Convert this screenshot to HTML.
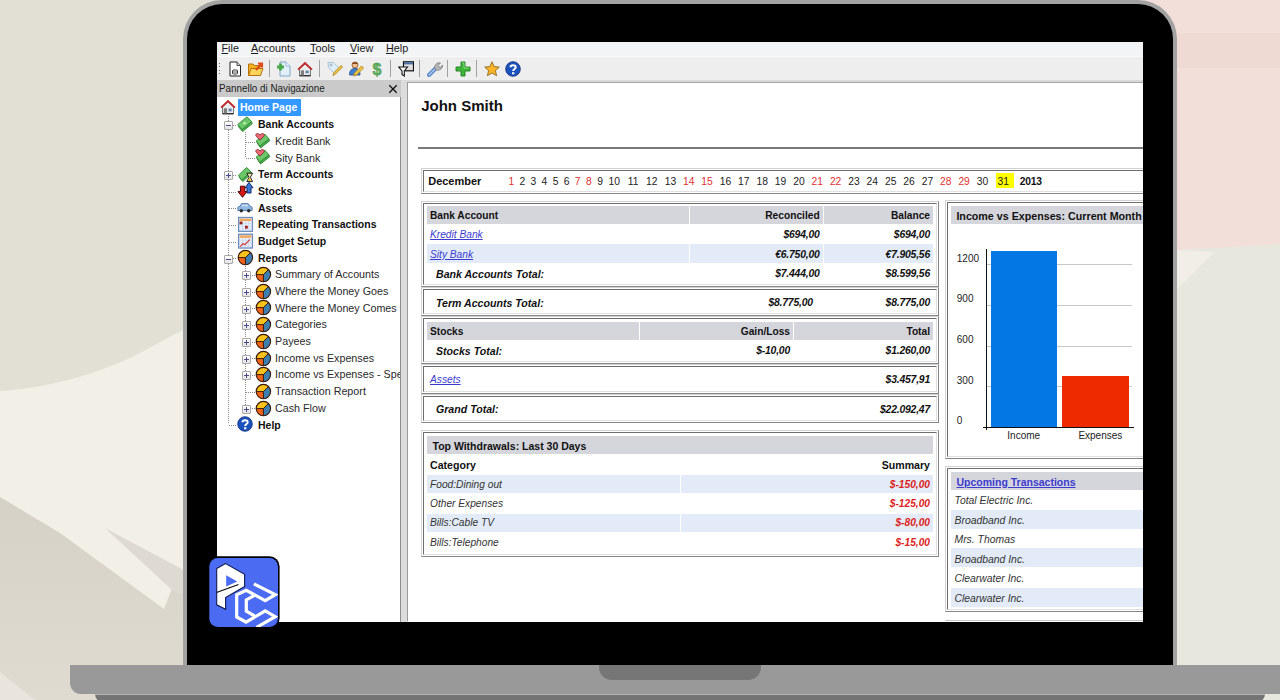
<!DOCTYPE html><html><head><meta charset="utf-8"><style>
*{margin:0;padding:0;box-sizing:border-box}
html,body{width:1280px;height:700px;overflow:hidden;background:#e6e4da;font-family:"Liberation Sans",sans-serif}
.a{position:absolute}
.t{white-space:nowrap;line-height:1}
#bg{position:absolute;left:0;top:0;width:1280px;height:700px}
#outline{position:absolute;left:183px;top:0px;width:994px;height:720px;background:#a2a2a2;border-radius:39px 39px 0 0}
#bezel{position:absolute;left:187px;top:3.6px;width:986px;height:700px;background:#000;border-radius:35px 35px 0 0}
#screen{position:absolute;left:217px;top:42px;width:926px;height:580px;background:#fff;overflow:hidden}
#inner{position:absolute;left:-217px;top:-42px;width:1280px;height:700px}
#base{position:absolute;left:70px;top:665px;width:1230px;height:29px;background:#999;border-radius:0 0 0 11px}
#basebot{position:absolute;left:95px;top:694px;width:1170px;height:8px;background:#747474;border-radius:0 0 8px 8px;border-top:1px solid #b4b4b4}
#notch{position:absolute;left:599px;top:665px;width:162px;height:15px;background:#767676;border-radius:0 0 13px 13px}
.box{position:absolute;border:1px solid;border-color:#d2d2d2 #868686 #868686 #d2d2d2;padding:1px}
.box>i{display:block;width:100%;height:100%;border:1px solid;border-color:#6e6e6e #e0e0e0 #e0e0e0 #6e6e6e}
.lk{color:#3b3bd0;text-decoration:underline}
</style></head><body>
<svg width="0" height="0" style="position:absolute"><defs>
<symbol id="house" viewBox="0 0 16 16" overflow="visible">
 <path d="M2.5 8 V15 H13.5 V8 L8 3 Z" fill="#ececec" stroke="#6a6a6a" stroke-width="0.9"/>
 <path d="M2.5 14.6 H13.5" stroke="#333" stroke-width="1.2"/>
 <path d="M1 8.6 L8 2 L15 8.6" fill="none" stroke="#c52a2e" stroke-width="1.8"/>
 <rect x="3.8" y="9.3" width="3.2" height="5.2" fill="#7d7d7d"/>
 <rect x="8.3" y="9.3" width="3.6" height="3.2" fill="#5a7fb3" stroke="#ddd" stroke-width="0.5"/>
</symbol>
<symbol id="money" viewBox="0 0 16 16" overflow="visible">
 <path d="M1.3 10.5 L11 2.3 L15.6 7.3 L5.6 15.6 Z" fill="#4caa4c" stroke="#2f8a34" stroke-width="0.9"/>
 <path d="M0.6 8.6 L10 0.8 L14.6 5.6 L5 13.5 Z" fill="#6cc66a" stroke="#2f8a34" stroke-width="0.9"/>
 <ellipse cx="7.6" cy="7.2" rx="1.6" ry="1.3" fill="#b6ecb0"/>
</symbol>
<symbol id="moneyheart" viewBox="0 0 16 16" overflow="visible">
 <path d="M2 9.8 L10.6 2.5 L15 7.5 L5.6 15 Z" fill="#4caa4c" stroke="#2f8a34" stroke-width="0.9"/>
 <path d="M1.2 8 L9.8 1.2 L14 5.8 L4.6 13.2 Z" fill="#6cc66a" stroke="#2f8a34" stroke-width="0.9"/>
 <path d="M5 7 L1.2 3.3 C-0.2 1.6 2.2 -0.6 3.8 1 L5 2.1 L6.2 1 C7.8 -0.6 10.2 1.6 8.8 3.3 Z" fill="#ec6a74" stroke="#7a1820" stroke-width="0.8"/>
</symbol>
<symbol id="term" viewBox="0 0 16 16" overflow="visible">
 <path d="M2 11 L10.7 2.6 L14.9 7 L5.8 15.6 Z" fill="#4caa4c" stroke="#2f8a34" stroke-width="0.9"/>
 <path d="M1.3 9.4 L9.7 1.4 L13.9 5.8 L4.6 14 Z" fill="#6cc66a" stroke="#2f8a34" stroke-width="0.9"/>
 <path d="M9.8 7.2 H15.6 L13.4 11.2 L15.6 15.6 H9.8 L12 11.2 Z" fill="#f3e7b0" stroke="#222" stroke-width="1"/>
 <path d="M10.8 15 H14.6 L12.7 12.2 Z" fill="#e8c020"/>
</symbol>
<symbol id="stocks" viewBox="0 0 16 16" overflow="visible">
 <path d="M8.2 4.8 L12 -0.6 L16 4.8 H14 V10 H10 V4.8 Z" fill="#3a78d8" stroke="#0b2a6a" stroke-width="1"/>
 <path d="M3.4 3.2 H7.8 V8.6 H9.9 L5.5 14.3 L1 8.6 H3.4 Z" fill="#d81818" stroke="#4a0505" stroke-width="1"/>
</symbol>
<symbol id="car" viewBox="0 0 16 16" overflow="visible">
 <path d="M0.9 11.6 V8.6 C0.9 7.8 1.6 7.6 2.8 7.4 L4.6 4.6 H11.2 L13.2 7.4 C14.6 7.6 15.1 7.9 15.1 8.6 V11.6 Z" fill="#90b6e2" stroke="#4a6f9e" stroke-width="0.9"/>
 <rect x="5.3" y="5.6" width="2.3" height="1.8" fill="#d9e7f7"/><rect x="8.3" y="5.6" width="2.3" height="1.8" fill="#d9e7f7"/>
 <circle cx="4.3" cy="11.8" r="1.7" fill="#2a2a2a"/><circle cx="11.7" cy="11.8" r="1.7" fill="#2a2a2a"/>
</symbol>
<symbol id="cal1" viewBox="0 0 16 16" overflow="visible">
 <rect x="1.6" y="1.5" width="13.8" height="13.8" fill="#eef3fb" stroke="#6a8cbf" stroke-width="1.3"/>
 <rect x="2.6" y="2.6" width="11.8" height="2.6" fill="#f3a860"/>
 <path d="M2.5 7.6 H14.5 M2.5 10.3 H14.5 M2.5 13 H14.5 M5.6 5.2 V14.5 M8.6 5.2 V14.5 M11.6 5.2 V14.5" stroke="#c4d3ea" stroke-width="0.7"/>
 <rect x="2.6" y="5.6" width="2.8" height="2.8" fill="#8e1a1a"/><rect x="8" y="9.8" width="2.8" height="2.8" fill="#a51c1c"/>
</symbol>
<symbol id="cal2" viewBox="0 0 16 16" overflow="visible">
 <rect x="1.6" y="1.2" width="13.8" height="13.8" fill="#eef3fb" stroke="#6a8cbf" stroke-width="1.3"/>
 <rect x="2.6" y="2.3" width="11.8" height="2.6" fill="#f3a860"/>
 <path d="M2.5 7.3 H14.5 M2.5 10 H14.5 M2.5 12.7 H14.5 M5.6 4.9 V14.2 M8.6 4.9 V14.2 M11.6 4.9 V14.2" stroke="#c4d3ea" stroke-width="0.7"/>
 <path d="M3.2 13.6 L6 10.8 L8 11.6 L12.8 6.6" fill="none" stroke="#d03a3a" stroke-width="1.2"/>
</symbol>
<symbol id="pie" viewBox="0 0 16 16" overflow="visible">
 <circle cx="8.4" cy="8.6" r="7.2" fill="#f2641a"/>
 <path d="M8.4 8.6 L1.2 8.6 A7.2 7.2 0 0 1 13.5 3.5 Z" fill="#f7c21c"/>
 <path d="M8.4 8.6 L13.5 3.5 A7.2 7.2 0 0 1 8.4 15.8 Z" fill="#3c7fb0"/>
 <path d="M1.2 8.6 H8.4 L13.5 3.5 M8.4 8.6 V15.8" stroke="#3a1a08" stroke-width="1" fill="none"/>
 <circle cx="8.4" cy="8.6" r="7.2" fill="none" stroke="#3a1a08" stroke-width="1.1"/>
</symbol>
<symbol id="help" viewBox="0 0 16 16" overflow="visible">
 <circle cx="8" cy="8" r="7.3" fill="#1c52bd" stroke="#0a2a78" stroke-width="0.8"/>
 <path d="M5.5 6.3 C5.5 3.5 10.7 3.5 10.7 6.2 C10.7 8.1 8.2 8 8.2 10.1" fill="none" stroke="#fff" stroke-width="2"/>
 <rect x="7.1" y="11.2" width="2.2" height="2.1" fill="#fff"/>
</symbol>
<symbol id="doc" viewBox="0 0 16 16">
 <path d="M3 1 H10 L13.5 4.5 V15 H3 Z" fill="#fff" stroke="#222" stroke-width="1"/>
 <path d="M10 1 V4.5 H13.5" fill="#ddd" stroke="#222" stroke-width="0.8"/>
 <rect x="5.5" y="9" width="5" height="4" rx="1" fill="none" stroke="#333" stroke-width="1"/>
 <path d="M5.5 11 H10.5" stroke="#333" stroke-width="0.8"/>
</symbol>
<symbol id="folder" viewBox="0 0 16 16">
 <path d="M0.5 3 H5 L6.5 4.5 H12 V14.5 H0.5 Z" fill="#f3b31f" stroke="#b7700c" stroke-width="1"/>
 <path d="M0.5 14.5 L3 7.5 H15 L12.5 14.5 Z" fill="#fbd25a" stroke="#b7700c" stroke-width="1"/>
 <path d="M8 9 L13 3.5 M10 2.5 H14 V6.5" fill="none" stroke="#e24a16" stroke-width="2.2"/>
</symbol>
<symbol id="adddoc" viewBox="0 0 16 16">
 <path d="M4 1 H10 L14 5 V15 H4 Z" fill="#e3f0fa" stroke="#7ea6c8" stroke-width="1"/>
 <path d="M10 1 V5 H14" fill="#fff" stroke="#7ea6c8" stroke-width="0.8"/>
 <path d="M4.5 2.5 V9.5 M1 6 H8" stroke="#48a84a" stroke-width="2.8"/>
</symbol>
<symbol id="tag" viewBox="0 0 16 16">
 <path d="M1 1.5 H6.5 L12 7 L7 12 L1.5 6.5 Z" fill="#dfeefa" stroke="#a9c3d8" stroke-width="1"/>
 <circle cx="4" cy="4" r="1" fill="#fff" stroke="#9ab"/>
 <path d="M6 14.5 L7 11.5 L14 4.5 L15.5 6 L8.5 13 Z" fill="#f3c94a" stroke="#b28516" stroke-width="0.9"/>
</symbol>
<symbol id="person" viewBox="0 0 16 16">
 <circle cx="7" cy="4" r="3" fill="#f0c090" stroke="#8a4a20" stroke-width="0.8"/>
 <path d="M4 3 C4 0.5 10 0.5 10 3" fill="#8a4a1a"/>
 <path d="M1.5 14 C1.5 9 4 7.5 7 7.5 C10 7.5 12 9 12 14 Z" fill="#3f7fd0" stroke="#1e4e90" stroke-width="0.8"/>
 <path d="M5.5 15 L6.5 12 L13.5 5 L15.5 7 L8.5 14 Z" fill="#f3c94a" stroke="#b28516" stroke-width="0.9"/>
</symbol>
<symbol id="dollar" viewBox="0 0 16 16">
 <text x="8" y="14" text-anchor="middle" font-family="Liberation Sans" font-weight="bold" font-size="16" fill="#5bb55a" stroke="#3a8a3a" stroke-width="0.4">$</text>
</symbol>
<symbol id="filter" viewBox="0 0 16 16">
 <rect x="5.5" y="0.8" width="10" height="9" fill="#e0e0e0" stroke="#111" stroke-width="1.2"/>
 <rect x="6" y="1.4" width="9" height="2" fill="#4a6fa8"/>
 <path d="M0.8 6 H9.5 L6.3 10 V15 L4 13.5 V10 Z" fill="#fff" stroke="#111" stroke-width="1.1"/>
</symbol>
<symbol id="wrench" viewBox="0 0 16 16">
 <path d="M2 14 L9 7" stroke="#5a87c8" stroke-width="4" stroke-linecap="round"/>
 <path d="M2 14 L9 7" stroke="#a8c8ee" stroke-width="1.5" stroke-linecap="round"/>
 <path d="M8 8 C7 4 10 1 13.5 2 L11 4.5 L12 6 L13.5 6.5 L15.5 4 C16 7.5 12.5 10 9.5 9 Z" fill="#b8b8b8" stroke="#777" stroke-width="0.8"/>
</symbol>
<symbol id="plus" viewBox="0 0 16 16">
 <path d="M6 1 H10 V6 H15 V10 H10 V15 H6 V10 H1 V6 H6 Z" fill="#3fb53a" stroke="#1d7d1d" stroke-width="0.9"/>
 <path d="M7 2 H9 V7 H14" fill="none" stroke="#9be28f" stroke-width="0.8"/>
</symbol>
<symbol id="star" viewBox="0 0 16 16">
 <path d="M8 0.8 L10.2 5.6 L15.3 6.1 L11.4 9.5 L12.6 14.7 L8 12 L3.4 14.7 L4.6 9.5 L0.7 6.1 L5.8 5.6 Z" fill="#f9b42a" stroke="#8f6a1e" stroke-width="0.9"/>
</symbol>
</defs></svg>
<svg id="bg" width="1280" height="700" viewBox="0 0 1280 700">
  <rect x="0" y="0" width="1280" height="700" fill="#e8e7dd"/>
  <path d="M0 0 H640 V700 H0 Z" fill="#e2e0d4"/>
  <path d="M0 391 C50 388 110 372 160 342 L240 300 V700 H0 Z" fill="#f2efe6"/>
  <defs><linearGradient id="dk" x1="0" y1="0" x2="0" y2="1"><stop offset="0" stop-color="#d6d1c7"/><stop offset="1" stop-color="#dfdbd1"/></linearGradient></defs><path d="M0 497 L60 533 L164 609 L172 588 L240 620 V700 H0 Z" fill="url(#dk)"/>
  <path d="M105 528 L240 600 V625 L172 590 Z" fill="#dedad1"/>
  <path d="M0 672 L35 700 H0 Z" fill="#e9e5dc"/>
  <path d="M900 0 H1280 V244 L1176 250 L900 300 Z" fill="#f2dfd9"/>
  <path d="M900 33 H1280 V68 H900 Z" fill="#eed9d3"/><path d="M1176 250 L1215 252 L1176 290 Z" fill="#f0eee6"/>
</svg>
<div id="outline"></div><div id="bezel"></div>
<div id="screen"><div id="inner">
<div class="a" style="left:217px;top:42px;width:926px;height:14px;background:#f3f4f5"></div>
<div class="a t" style="left:221.50px;top:42.53px;font-size:10.8px;font-weight:normal;font-style:normal;color:#1a1a1a;"><u>F</u>ile</div>
<div class="a t" style="left:251.00px;top:42.53px;font-size:10.8px;font-weight:normal;font-style:normal;color:#1a1a1a;"><u>A</u>ccounts</div>
<div class="a t" style="left:310.00px;top:42.53px;font-size:10.8px;font-weight:normal;font-style:normal;color:#1a1a1a;"><u>T</u>ools</div>
<div class="a t" style="left:350.00px;top:42.53px;font-size:10.8px;font-weight:normal;font-style:normal;color:#1a1a1a;"><u>V</u>iew</div>
<div class="a t" style="left:386.00px;top:42.53px;font-size:10.8px;font-weight:normal;font-style:normal;color:#1a1a1a;"><u>H</u>elp</div>
<div class="a" style="left:217px;top:57px;width:926px;height:23px;background:#eeeeee"></div>
<div class="a" style="left:217px;top:56px;width:926px;height:1px;background:#f9f9f9"></div>
<div class="a" style="left:219px;top:63px;width:1px;height:1px;background:#666"></div>
<div class="a" style="left:219px;top:66px;width:1px;height:1px;background:#666"></div>
<div class="a" style="left:219px;top:70px;width:1px;height:1px;background:#666"></div>
<div class="a" style="left:219px;top:73px;width:1px;height:1px;background:#666"></div>
<svg class="a" style="left:226.5px;top:60.5px;overflow:visible" width="16" height="16" viewBox="0 0 16 16"><use href="#doc"/></svg>
<svg class="a" style="left:247.5px;top:60.5px;overflow:visible" width="16" height="16" viewBox="0 0 16 16"><use href="#folder"/></svg>
<svg class="a" style="left:276px;top:60.5px;overflow:visible" width="16" height="16" viewBox="0 0 16 16"><use href="#adddoc"/></svg>
<svg class="a" style="left:297px;top:60.5px;overflow:visible" width="16" height="16" viewBox="0 0 16 16"><use href="#house"/></svg>
<svg class="a" style="left:326.5px;top:60.5px;overflow:visible" width="16" height="16" viewBox="0 0 16 16"><use href="#tag"/></svg>
<svg class="a" style="left:347.5px;top:60.5px;overflow:visible" width="16" height="16" viewBox="0 0 16 16"><use href="#person"/></svg>
<svg class="a" style="left:369px;top:60.5px;overflow:visible" width="16" height="16" viewBox="0 0 16 16"><use href="#dollar"/></svg>
<svg class="a" style="left:398px;top:60.5px;overflow:visible" width="16" height="16" viewBox="0 0 16 16"><use href="#filter"/></svg>
<svg class="a" style="left:426.5px;top:60.5px;overflow:visible" width="16" height="16" viewBox="0 0 16 16"><use href="#wrench"/></svg>
<svg class="a" style="left:455px;top:60.5px;overflow:visible" width="16" height="16" viewBox="0 0 16 16"><use href="#plus"/></svg>
<svg class="a" style="left:483.5px;top:60.5px;overflow:visible" width="16" height="16" viewBox="0 0 16 16"><use href="#star"/></svg>
<svg class="a" style="left:504.5px;top:60.5px;overflow:visible" width="16" height="16" viewBox="0 0 16 16"><use href="#help"/></svg>
<div class="a" style="left:269px;top:60px;width:1px;height:17px;background:#a0a0a0"></div>
<div class="a" style="left:319px;top:60px;width:1px;height:17px;background:#a0a0a0"></div>
<div class="a" style="left:390px;top:60px;width:1px;height:17px;background:#a0a0a0"></div>
<div class="a" style="left:419px;top:60px;width:1px;height:17px;background:#a0a0a0"></div>
<div class="a" style="left:447px;top:60px;width:1px;height:17px;background:#a0a0a0"></div>
<div class="a" style="left:476px;top:60px;width:1px;height:17px;background:#a0a0a0"></div>
<div class="a" style="left:217px;top:80px;width:184px;height:17px;background:#cacaca"></div>
<div class="a t" style="left:219.30px;top:83.03px;font-size:11px;font-weight:normal;font-style:normal;color:#1a1a1a;transform:scaleX(0.895);transform-origin:0 0">Pannello di Navigazione</div>
<svg class="a" style="left:388px;top:84px" width="10" height="10" viewBox="0 0 10 10"><path d="M1.3 1.3 L8.7 8.7 M8.7 1.3 L1.3 8.7" stroke="#111" stroke-width="1.3"/></svg>
<div class="a" style="left:217px;top:97px;width:183px;height:524px;background:#fff"></div>
<div class="a" style="left:400px;top:97px;width:1.5px;height:525px;background:#8e8e8e"></div>
<div class="a" style="left:401px;top:80px;width:7px;height:542px;background:#dcdcdc"></div>
<div class="a" style="left:407px;top:82px;width:1px;height:539px;background:#9a9a9a"></div>
<div class="a" style="left:408px;top:80px;width:735px;height:2px;background:#d8d8d8"></div>
<div class="a" style="left:408px;top:82px;width:735px;height:539px;background:#fff;border-top:1px solid #a8a8a8"></div>
<div class="a" style="left:217px;top:97px;width:183px;height:524px;overflow:hidden"><div class="a" style="left:-217px;top:-97px;width:1280px;height:700px">
<div class="a" style="left:228px;top:116px;width:1px;height:308px;background:repeating-linear-gradient(180deg,#8a8a8a 0 1px,transparent 1px 2px)"></div>
<div class="a" style="left:245px;top:132px;width:1px;height:25px;background:repeating-linear-gradient(180deg,#8a8a8a 0 1px,transparent 1px 2px)"></div>
<div class="a" style="left:245px;top:266px;width:1px;height:141px;background:repeating-linear-gradient(180deg,#8a8a8a 0 1px,transparent 1px 2px)"></div>
<svg class="a" style="left:220px;top:99px;overflow:visible" width="16" height="16" viewBox="0 0 16 16"><use href="#house"/></svg>
<div class="a" style="left:238px;top:99px;width:63px;height:17px;background:#3399ff"></div>
<div class="a t" style="left:240.30px;top:101.79px;font-size:11.3px;font-weight:bold;font-style:normal;color:#fff;transform:scaleX(0.93);transform-origin:0 0">Home Page</div>
<div class="a" style="left:229px;top:125px;width:8px;height:1px;background:repeating-linear-gradient(90deg,#8a8a8a 0 1px,transparent 1px 2px)"></div>
<svg class="a" style="left:237px;top:116px;overflow:visible" width="16" height="16" viewBox="0 0 16 16"><use href="#money"/></svg>
<div class="a" style="left:224px;top:121.1px;width:9px;height:9px;border:1px solid #a8a8a8;background:linear-gradient(#fff,#e4e4e4);border-radius:1px"></div>
<div class="a" style="left:226px;top:125.1px;width:5px;height:1px;background:#4a4a8a"></div>
<div class="a t" style="left:258.00px;top:119.27px;font-size:11.3px;font-weight:bold;font-style:normal;color:#111;transform:scaleX(0.93);transform-origin:0 0">Bank Accounts</div>
<div class="a" style="left:246px;top:142px;width:9px;height:1px;background:repeating-linear-gradient(90deg,#8a8a8a 0 1px,transparent 1px 2px)"></div>
<svg class="a" style="left:255px;top:133px;overflow:visible" width="16" height="16" viewBox="0 0 16 16"><use href="#moneyheart"/></svg>
<div class="a t" style="left:275.00px;top:135.95px;font-size:11.3px;font-weight:normal;font-style:normal;color:#2a2a2a;transform:scaleX(0.95);transform-origin:0 0">Kredit Bank</div>
<div class="a" style="left:246px;top:158px;width:9px;height:1px;background:repeating-linear-gradient(90deg,#8a8a8a 0 1px,transparent 1px 2px)"></div>
<svg class="a" style="left:255px;top:149px;overflow:visible" width="16" height="16" viewBox="0 0 16 16"><use href="#moneyheart"/></svg>
<div class="a t" style="left:275.00px;top:152.63px;font-size:11.3px;font-weight:normal;font-style:normal;color:#2a2a2a;transform:scaleX(0.95);transform-origin:0 0">Sity Bank</div>
<div class="a" style="left:229px;top:175px;width:8px;height:1px;background:repeating-linear-gradient(90deg,#8a8a8a 0 1px,transparent 1px 2px)"></div>
<svg class="a" style="left:237px;top:166px;overflow:visible" width="16" height="16" viewBox="0 0 16 16"><use href="#term"/></svg>
<div class="a" style="left:224px;top:171.1px;width:9px;height:9px;border:1px solid #a8a8a8;background:linear-gradient(#fff,#e4e4e4);border-radius:1px"></div>
<div class="a" style="left:226px;top:175.1px;width:5px;height:1px;background:#4a4a8a"></div>
<div class="a" style="left:228px;top:173.1px;width:1px;height:5px;background:#4a4a8a"></div>
<div class="a t" style="left:258.00px;top:169.31px;font-size:11.3px;font-weight:bold;font-style:normal;color:#111;transform:scaleX(0.93);transform-origin:0 0">Term Accounts</div>
<div class="a" style="left:229px;top:192px;width:8px;height:1px;background:repeating-linear-gradient(90deg,#8a8a8a 0 1px,transparent 1px 2px)"></div>
<svg class="a" style="left:237px;top:183px;overflow:visible" width="16" height="16" viewBox="0 0 16 16"><use href="#stocks"/></svg>
<div class="a t" style="left:258.00px;top:185.99px;font-size:11.3px;font-weight:bold;font-style:normal;color:#111;transform:scaleX(0.93);transform-origin:0 0">Stocks</div>
<div class="a" style="left:229px;top:208px;width:8px;height:1px;background:repeating-linear-gradient(90deg,#8a8a8a 0 1px,transparent 1px 2px)"></div>
<svg class="a" style="left:237px;top:199px;overflow:visible" width="16" height="16" viewBox="0 0 16 16"><use href="#car"/></svg>
<div class="a t" style="left:258.00px;top:202.67px;font-size:11.3px;font-weight:bold;font-style:normal;color:#111;transform:scaleX(0.93);transform-origin:0 0">Assets</div>
<div class="a" style="left:229px;top:225px;width:8px;height:1px;background:repeating-linear-gradient(90deg,#8a8a8a 0 1px,transparent 1px 2px)"></div>
<svg class="a" style="left:237px;top:216px;overflow:visible" width="16" height="16" viewBox="0 0 16 16"><use href="#cal1"/></svg>
<div class="a t" style="left:258.00px;top:219.35px;font-size:11.3px;font-weight:bold;font-style:normal;color:#111;transform:scaleX(0.93);transform-origin:0 0">Repeating Transactions</div>
<div class="a" style="left:229px;top:242px;width:8px;height:1px;background:repeating-linear-gradient(90deg,#8a8a8a 0 1px,transparent 1px 2px)"></div>
<svg class="a" style="left:237px;top:233px;overflow:visible" width="16" height="16" viewBox="0 0 16 16"><use href="#cal2"/></svg>
<div class="a t" style="left:258.00px;top:236.03px;font-size:11.3px;font-weight:bold;font-style:normal;color:#111;transform:scaleX(0.93);transform-origin:0 0">Budget Setup</div>
<div class="a" style="left:229px;top:258px;width:8px;height:1px;background:repeating-linear-gradient(90deg,#8a8a8a 0 1px,transparent 1px 2px)"></div>
<svg class="a" style="left:237px;top:249px;overflow:visible" width="16" height="16" viewBox="0 0 16 16"><use href="#pie"/></svg>
<div class="a" style="left:224px;top:254.5px;width:9px;height:9px;border:1px solid #a8a8a8;background:linear-gradient(#fff,#e4e4e4);border-radius:1px"></div>
<div class="a" style="left:226px;top:258.5px;width:5px;height:1px;background:#4a4a8a"></div>
<div class="a t" style="left:258.00px;top:252.71px;font-size:11.3px;font-weight:bold;font-style:normal;color:#111;transform:scaleX(0.93);transform-origin:0 0">Reports</div>
<div class="a" style="left:246px;top:275px;width:9px;height:1px;background:repeating-linear-gradient(90deg,#8a8a8a 0 1px,transparent 1px 2px)"></div>
<svg class="a" style="left:255px;top:266px;overflow:visible" width="16" height="16" viewBox="0 0 16 16"><use href="#pie"/></svg>
<div class="a" style="left:241.5px;top:271.2px;width:9px;height:9px;border:1px solid #a8a8a8;background:linear-gradient(#fff,#e4e4e4);border-radius:1px"></div>
<div class="a" style="left:243.5px;top:275.2px;width:5px;height:1px;background:#4a4a8a"></div>
<div class="a" style="left:245.5px;top:273.2px;width:1px;height:5px;background:#4a4a8a"></div>
<div class="a t" style="left:275.00px;top:269.39px;font-size:11.3px;font-weight:normal;font-style:normal;color:#2a2a2a;transform:scaleX(0.95);transform-origin:0 0">Summary of Accounts</div>
<div class="a" style="left:246px;top:292px;width:9px;height:1px;background:repeating-linear-gradient(90deg,#8a8a8a 0 1px,transparent 1px 2px)"></div>
<svg class="a" style="left:255px;top:283px;overflow:visible" width="16" height="16" viewBox="0 0 16 16"><use href="#pie"/></svg>
<div class="a" style="left:241.5px;top:287.9px;width:9px;height:9px;border:1px solid #a8a8a8;background:linear-gradient(#fff,#e4e4e4);border-radius:1px"></div>
<div class="a" style="left:243.5px;top:291.9px;width:5px;height:1px;background:#4a4a8a"></div>
<div class="a" style="left:245.5px;top:289.9px;width:1px;height:5px;background:#4a4a8a"></div>
<div class="a t" style="left:275.00px;top:286.07px;font-size:11.3px;font-weight:normal;font-style:normal;color:#2a2a2a;transform:scaleX(0.95);transform-origin:0 0">Where the Money Goes</div>
<div class="a" style="left:246px;top:308px;width:9px;height:1px;background:repeating-linear-gradient(90deg,#8a8a8a 0 1px,transparent 1px 2px)"></div>
<svg class="a" style="left:255px;top:299px;overflow:visible" width="16" height="16" viewBox="0 0 16 16"><use href="#pie"/></svg>
<div class="a" style="left:241.5px;top:304.6px;width:9px;height:9px;border:1px solid #a8a8a8;background:linear-gradient(#fff,#e4e4e4);border-radius:1px"></div>
<div class="a" style="left:243.5px;top:308.6px;width:5px;height:1px;background:#4a4a8a"></div>
<div class="a" style="left:245.5px;top:306.6px;width:1px;height:5px;background:#4a4a8a"></div>
<div class="a t" style="left:275.00px;top:302.75px;font-size:11.3px;font-weight:normal;font-style:normal;color:#2a2a2a;transform:scaleX(0.95);transform-origin:0 0">Where the Money Comes</div>
<div class="a" style="left:246px;top:325px;width:9px;height:1px;background:repeating-linear-gradient(90deg,#8a8a8a 0 1px,transparent 1px 2px)"></div>
<svg class="a" style="left:255px;top:316px;overflow:visible" width="16" height="16" viewBox="0 0 16 16"><use href="#pie"/></svg>
<div class="a" style="left:241.5px;top:321.2px;width:9px;height:9px;border:1px solid #a8a8a8;background:linear-gradient(#fff,#e4e4e4);border-radius:1px"></div>
<div class="a" style="left:243.5px;top:325.2px;width:5px;height:1px;background:#4a4a8a"></div>
<div class="a" style="left:245.5px;top:323.2px;width:1px;height:5px;background:#4a4a8a"></div>
<div class="a t" style="left:275.00px;top:319.43px;font-size:11.3px;font-weight:normal;font-style:normal;color:#2a2a2a;transform:scaleX(0.95);transform-origin:0 0">Categories</div>
<div class="a" style="left:246px;top:342px;width:9px;height:1px;background:repeating-linear-gradient(90deg,#8a8a8a 0 1px,transparent 1px 2px)"></div>
<svg class="a" style="left:255px;top:333px;overflow:visible" width="16" height="16" viewBox="0 0 16 16"><use href="#pie"/></svg>
<div class="a" style="left:241.5px;top:337.9px;width:9px;height:9px;border:1px solid #a8a8a8;background:linear-gradient(#fff,#e4e4e4);border-radius:1px"></div>
<div class="a" style="left:243.5px;top:341.9px;width:5px;height:1px;background:#4a4a8a"></div>
<div class="a" style="left:245.5px;top:339.9px;width:1px;height:5px;background:#4a4a8a"></div>
<div class="a t" style="left:275.00px;top:336.11px;font-size:11.3px;font-weight:normal;font-style:normal;color:#2a2a2a;transform:scaleX(0.95);transform-origin:0 0">Payees</div>
<div class="a" style="left:246px;top:358px;width:9px;height:1px;background:repeating-linear-gradient(90deg,#8a8a8a 0 1px,transparent 1px 2px)"></div>
<svg class="a" style="left:255px;top:350px;overflow:visible" width="16" height="16" viewBox="0 0 16 16"><use href="#pie"/></svg>
<div class="a" style="left:241.5px;top:354.6px;width:9px;height:9px;border:1px solid #a8a8a8;background:linear-gradient(#fff,#e4e4e4);border-radius:1px"></div>
<div class="a" style="left:243.5px;top:358.6px;width:5px;height:1px;background:#4a4a8a"></div>
<div class="a" style="left:245.5px;top:356.6px;width:1px;height:5px;background:#4a4a8a"></div>
<div class="a t" style="left:275.00px;top:352.79px;font-size:11.3px;font-weight:normal;font-style:normal;color:#2a2a2a;transform:scaleX(0.95);transform-origin:0 0">Income vs Expenses</div>
<div class="a" style="left:246px;top:375px;width:9px;height:1px;background:repeating-linear-gradient(90deg,#8a8a8a 0 1px,transparent 1px 2px)"></div>
<svg class="a" style="left:255px;top:366px;overflow:visible" width="16" height="16" viewBox="0 0 16 16"><use href="#pie"/></svg>
<div class="a" style="left:241.5px;top:371.3px;width:9px;height:9px;border:1px solid #a8a8a8;background:linear-gradient(#fff,#e4e4e4);border-radius:1px"></div>
<div class="a" style="left:243.5px;top:375.3px;width:5px;height:1px;background:#4a4a8a"></div>
<div class="a" style="left:245.5px;top:373.3px;width:1px;height:5px;background:#4a4a8a"></div>
<div class="a t" style="left:275.00px;top:369.47px;font-size:11.3px;font-weight:normal;font-style:normal;color:#2a2a2a;transform:scaleX(0.95);transform-origin:0 0">Income vs Expenses - Spe</div>
<div class="a" style="left:246px;top:392px;width:9px;height:1px;background:repeating-linear-gradient(90deg,#8a8a8a 0 1px,transparent 1px 2px)"></div>
<svg class="a" style="left:255px;top:383px;overflow:visible" width="16" height="16" viewBox="0 0 16 16"><use href="#pie"/></svg>
<div class="a t" style="left:275.00px;top:386.15px;font-size:11.3px;font-weight:normal;font-style:normal;color:#2a2a2a;transform:scaleX(0.95);transform-origin:0 0">Transaction Report</div>
<div class="a" style="left:246px;top:408px;width:9px;height:1px;background:repeating-linear-gradient(90deg,#8a8a8a 0 1px,transparent 1px 2px)"></div>
<svg class="a" style="left:255px;top:400px;overflow:visible" width="16" height="16" viewBox="0 0 16 16"><use href="#pie"/></svg>
<div class="a" style="left:241.5px;top:404.6px;width:9px;height:9px;border:1px solid #a8a8a8;background:linear-gradient(#fff,#e4e4e4);border-radius:1px"></div>
<div class="a" style="left:243.5px;top:408.6px;width:5px;height:1px;background:#4a4a8a"></div>
<div class="a" style="left:245.5px;top:406.6px;width:1px;height:5px;background:#4a4a8a"></div>
<div class="a t" style="left:275.00px;top:402.83px;font-size:11.3px;font-weight:normal;font-style:normal;color:#2a2a2a;transform:scaleX(0.95);transform-origin:0 0">Cash Flow</div>
<div class="a" style="left:229px;top:425px;width:8px;height:1px;background:repeating-linear-gradient(90deg,#8a8a8a 0 1px,transparent 1px 2px)"></div>
<svg class="a" style="left:237px;top:416px;overflow:visible" width="16" height="16" viewBox="0 0 16 16"><use href="#help"/></svg>
<div class="a t" style="left:258.00px;top:419.51px;font-size:11.3px;font-weight:bold;font-style:normal;color:#111;transform:scaleX(0.93);transform-origin:0 0">Help</div>
</div></div>
<div class="a t" style="left:421.20px;top:97.68px;font-size:15px;font-weight:bold;font-style:normal;color:#111;">John Smith</div>
<div class="a" style="left:418px;top:147px;width:725px;height:2px;background:#7a7a7a"></div>
<div class="box" style="left:421px;top:168px;width:760px;height:26px"><i></i></div>
<div class="a t" style="left:428.20px;top:176.43px;font-size:11px;font-weight:bold;font-style:normal;color:#111;">December</div>
<div class="a t" style="left:508.60px;top:176.77px;font-size:10.3px;font-weight:normal;font-style:normal;color:#e03030;">1</div>
<div class="a t" style="left:519.50px;top:176.77px;font-size:10.3px;font-weight:normal;font-style:normal;color:#222;">2</div>
<div class="a t" style="left:530.50px;top:176.77px;font-size:10.3px;font-weight:normal;font-style:normal;color:#222;">3</div>
<div class="a t" style="left:541.40px;top:176.77px;font-size:10.3px;font-weight:normal;font-style:normal;color:#222;">4</div>
<div class="a t" style="left:552.80px;top:176.77px;font-size:10.3px;font-weight:normal;font-style:normal;color:#222;">5</div>
<div class="a t" style="left:563.75px;top:176.77px;font-size:10.3px;font-weight:normal;font-style:normal;color:#222;">6</div>
<div class="a t" style="left:574.70px;top:176.77px;font-size:10.3px;font-weight:normal;font-style:normal;color:#e03030;">7</div>
<div class="a t" style="left:586.00px;top:176.77px;font-size:10.3px;font-weight:normal;font-style:normal;color:#e03030;">8</div>
<div class="a t" style="left:597.20px;top:176.77px;font-size:10.3px;font-weight:normal;font-style:normal;color:#222;">9</div>
<div class="a t" style="left:608.60px;top:176.77px;font-size:10.3px;font-weight:normal;font-style:normal;color:#222;">10</div>
<div class="a t" style="left:627.80px;top:176.77px;font-size:10.3px;font-weight:normal;font-style:normal;color:#222;">11</div>
<div class="a t" style="left:646.00px;top:176.77px;font-size:10.3px;font-weight:normal;font-style:normal;color:#222;">12</div>
<div class="a t" style="left:664.80px;top:176.77px;font-size:10.3px;font-weight:normal;font-style:normal;color:#222;">13</div>
<div class="a t" style="left:683.00px;top:176.77px;font-size:10.3px;font-weight:normal;font-style:normal;color:#e03030;">14</div>
<div class="a t" style="left:701.36px;top:176.77px;font-size:10.3px;font-weight:normal;font-style:normal;color:#e03030;">15</div>
<div class="a t" style="left:719.72px;top:176.77px;font-size:10.3px;font-weight:normal;font-style:normal;color:#222;">16</div>
<div class="a t" style="left:738.08px;top:176.77px;font-size:10.3px;font-weight:normal;font-style:normal;color:#222;">17</div>
<div class="a t" style="left:756.44px;top:176.77px;font-size:10.3px;font-weight:normal;font-style:normal;color:#222;">18</div>
<div class="a t" style="left:774.80px;top:176.77px;font-size:10.3px;font-weight:normal;font-style:normal;color:#222;">19</div>
<div class="a t" style="left:793.16px;top:176.77px;font-size:10.3px;font-weight:normal;font-style:normal;color:#222;">20</div>
<div class="a t" style="left:811.52px;top:176.77px;font-size:10.3px;font-weight:normal;font-style:normal;color:#e03030;">21</div>
<div class="a t" style="left:829.88px;top:176.77px;font-size:10.3px;font-weight:normal;font-style:normal;color:#e03030;">22</div>
<div class="a t" style="left:848.24px;top:176.77px;font-size:10.3px;font-weight:normal;font-style:normal;color:#222;">23</div>
<div class="a t" style="left:866.60px;top:176.77px;font-size:10.3px;font-weight:normal;font-style:normal;color:#222;">24</div>
<div class="a t" style="left:884.96px;top:176.77px;font-size:10.3px;font-weight:normal;font-style:normal;color:#222;">25</div>
<div class="a t" style="left:903.32px;top:176.77px;font-size:10.3px;font-weight:normal;font-style:normal;color:#222;">26</div>
<div class="a t" style="left:921.68px;top:176.77px;font-size:10.3px;font-weight:normal;font-style:normal;color:#222;">27</div>
<div class="a t" style="left:940.04px;top:176.77px;font-size:10.3px;font-weight:normal;font-style:normal;color:#e03030;">28</div>
<div class="a t" style="left:958.40px;top:176.77px;font-size:10.3px;font-weight:normal;font-style:normal;color:#e03030;">29</div>
<div class="a t" style="left:976.76px;top:176.77px;font-size:10.3px;font-weight:normal;font-style:normal;color:#222;">30</div>
<div class="a" style="left:996px;top:173px;width:18px;height:15px;background:#ffff00"></div>
<div class="a t" style="left:997.50px;top:176.77px;font-size:10.3px;font-weight:normal;font-style:normal;color:#222;">31</div>
<div class="a t" style="left:1019.70px;top:176.77px;font-size:10.3px;font-weight:bold;font-style:normal;color:#111;letter-spacing:-0.2px">2013</div>
<div class="box" style="left:421px;top:201px;width:518px;height:86px"><i></i></div>
<div class="a" style="left:427px;top:206px;width:262px;height:18px;background:#d5d5dc"></div>
<div class="a" style="left:690px;top:206px;width:133px;height:18px;background:#d5d5dc"></div>
<div class="a" style="left:824px;top:206px;width:109px;height:18px;background:#d5d5dc"></div>
<div class="a" style="left:427px;top:244px;width:262px;height:19px;background:#e2ebf7"></div>
<div class="a" style="left:690px;top:244px;width:133px;height:19px;background:#e2ebf7"></div>
<div class="a" style="left:824px;top:244px;width:109px;height:19px;background:#e2ebf7"></div>
<div class="a t" style="left:430.00px;top:210.62px;font-size:10.2px;font-weight:bold;font-style:normal;color:#111;">Bank Account</div>
<div class="a t" style="right:460.40px;top:210.62px;font-size:10.2px;font-weight:bold;font-style:normal;color:#111;">Reconciled</div>
<div class="a t" style="right:350.00px;top:210.62px;font-size:10.2px;font-weight:bold;font-style:normal;color:#111;">Balance</div>
<div class="a t" style="left:430.00px;top:230.42px;font-size:10.2px;font-weight:normal;font-style:italic;color:#000;color:#3b3bd0;text-decoration:underline">Kredit Bank</div>
<div class="a t" style="right:460.40px;top:230.32px;font-size:10.4px;font-weight:bold;font-style:italic;color:#111;letter-spacing:-0.2px">$694,00</div>
<div class="a t" style="right:350.00px;top:230.32px;font-size:10.4px;font-weight:bold;font-style:italic;color:#111;letter-spacing:-0.2px">$694,00</div>
<div class="a t" style="left:430.00px;top:249.82px;font-size:10.2px;font-weight:normal;font-style:italic;color:#000;color:#3b3bd0;text-decoration:underline">Sity Bank</div>
<div class="a t" style="right:460.40px;top:249.72px;font-size:10.4px;font-weight:bold;font-style:italic;color:#111;letter-spacing:-0.2px">&euro;6.750,00</div>
<div class="a t" style="right:350.00px;top:249.72px;font-size:10.4px;font-weight:bold;font-style:italic;color:#111;letter-spacing:-0.2px">&euro;7.905,56</div>
<div class="a t" style="left:436.00px;top:269.03px;font-size:10.6px;font-weight:bold;font-style:italic;color:#111;">Bank Accounts Total:</div>
<div class="a t" style="right:460.40px;top:269.12px;font-size:10.4px;font-weight:bold;font-style:italic;color:#111;letter-spacing:-0.2px">$7.444,00</div>
<div class="a t" style="right:350.00px;top:269.12px;font-size:10.4px;font-weight:bold;font-style:italic;color:#111;letter-spacing:-0.2px">$8.599,56</div>
<div class="box" style="left:421px;top:287px;width:518px;height:29px"><i></i></div>
<div class="a t" style="left:436.00px;top:297.53px;font-size:10.6px;font-weight:bold;font-style:italic;color:#111;">Term Accounts Total:</div>
<div class="a t" style="right:467.20px;top:297.62px;font-size:10.4px;font-weight:bold;font-style:italic;color:#111;letter-spacing:-0.2px">$8.775,00</div>
<div class="a t" style="right:350.00px;top:297.62px;font-size:10.4px;font-weight:bold;font-style:italic;color:#111;letter-spacing:-0.2px">$8.775,00</div>
<div class="box" style="left:421px;top:316px;width:518px;height:48px"><i></i></div>
<div class="a" style="left:427px;top:322px;width:212px;height:18px;background:#d5d5dc"></div>
<div class="a" style="left:640px;top:322px;width:153px;height:18px;background:#d5d5dc"></div>
<div class="a" style="left:794px;top:322px;width:139px;height:18px;background:#d5d5dc"></div>
<div class="a t" style="left:430.00px;top:326.62px;font-size:10.2px;font-weight:bold;font-style:normal;color:#111;">Stocks</div>
<div class="a t" style="right:490.00px;top:326.62px;font-size:10.2px;font-weight:bold;font-style:normal;color:#111;">Gain/Loss</div>
<div class="a t" style="right:350.00px;top:326.62px;font-size:10.2px;font-weight:bold;font-style:normal;color:#111;">Total</div>
<div class="a t" style="left:436.00px;top:346.13px;font-size:10.6px;font-weight:bold;font-style:italic;color:#111;">Stocks Total:</div>
<div class="a t" style="right:490.00px;top:346.22px;font-size:10.4px;font-weight:bold;font-style:italic;color:#111;letter-spacing:-0.2px">$-10,00</div>
<div class="a t" style="right:350.00px;top:346.22px;font-size:10.4px;font-weight:bold;font-style:italic;color:#111;letter-spacing:-0.2px">$1.260,00</div>
<div class="box" style="left:421px;top:364px;width:518px;height:30px"><i></i></div>
<div class="a t" style="left:430.00px;top:375.22px;font-size:10.2px;font-weight:normal;font-style:italic;color:#000;color:#3b3bd0;text-decoration:underline">Assets</div>
<div class="a t" style="right:350.00px;top:375.12px;font-size:10.4px;font-weight:bold;font-style:italic;color:#111;letter-spacing:-0.2px">$3.457,91</div>
<div class="box" style="left:421px;top:394px;width:518px;height:29px"><i></i></div>
<div class="a t" style="left:436.00px;top:404.43px;font-size:10.6px;font-weight:bold;font-style:italic;color:#111;">Grand Total:</div>
<div class="a t" style="right:350.00px;top:404.52px;font-size:10.4px;font-weight:bold;font-style:italic;color:#111;letter-spacing:-0.2px">$22.092,47</div>
<div class="box" style="left:421px;top:430px;width:518px;height:127px"><i></i></div>
<div class="a" style="left:427px;top:435.5px;width:506px;height:18px;background:#d5d5dc"></div>
<div class="a t" style="left:432.50px;top:440.68px;font-size:10.5px;font-weight:bold;font-style:normal;color:#111;">Top Withdrawals: Last 30 Days</div>
<div class="a t" style="left:430.00px;top:459.93px;font-size:10.6px;font-weight:bold;font-style:normal;color:#111;">Category</div>
<div class="a t" style="right:350.00px;top:459.93px;font-size:10.6px;font-weight:bold;font-style:normal;color:#111;">Summary</div>
<div class="a" style="left:427px;top:475px;width:253px;height:18px;background:#e2ebf7"></div>
<div class="a" style="left:681px;top:475px;width:252px;height:18px;background:#e2ebf7"></div>
<div class="a" style="left:427px;top:513.5px;width:253px;height:18.5px;background:#e2ebf7"></div>
<div class="a" style="left:681px;top:513.5px;width:252px;height:18.5px;background:#e2ebf7"></div>
<div class="a t" style="left:430.00px;top:479.52px;font-size:10.2px;font-weight:normal;font-style:italic;color:#333;">Food:Dining out</div>
<div class="a t" style="right:350.00px;top:479.52px;font-size:10.2px;font-weight:bold;font-style:italic;color:#dd2222;">$-150,00</div>
<div class="a t" style="left:430.00px;top:498.97px;font-size:10.2px;font-weight:normal;font-style:italic;color:#333;">Other Expenses</div>
<div class="a t" style="right:350.00px;top:498.97px;font-size:10.2px;font-weight:bold;font-style:italic;color:#dd2222;">$-125,00</div>
<div class="a t" style="left:430.00px;top:518.42px;font-size:10.2px;font-weight:normal;font-style:italic;color:#333;">Bills:Cable TV</div>
<div class="a t" style="right:350.00px;top:518.42px;font-size:10.2px;font-weight:bold;font-style:italic;color:#dd2222;">$-80,00</div>
<div class="a t" style="left:430.00px;top:537.87px;font-size:10.2px;font-weight:normal;font-style:italic;color:#333;">Bills:Telephone</div>
<div class="a t" style="right:350.00px;top:537.87px;font-size:10.2px;font-weight:bold;font-style:italic;color:#dd2222;">$-15,00</div>
<div class="box" style="left:945px;top:200px;width:260px;height:259px"><i></i></div>
<div class="a" style="left:951px;top:206px;width:200px;height:18px;background:#d5d5dc"></div>
<div class="a t" style="left:956.40px;top:210.58px;font-size:10.7px;font-weight:bold;font-style:normal;color:#111;">Income vs Expenses: Current Month</div>
<div class="a" style="left:987px;top:264px;width:145px;height:1px;background:#c8c8c8"></div>
<div class="a t" style="left:956.80px;top:253.62px;font-size:10px;font-weight:normal;font-style:normal;color:#222;">1200</div>
<div class="a" style="left:987px;top:305px;width:145px;height:1px;background:#c8c8c8"></div>
<div class="a t" style="left:956.80px;top:294.29px;font-size:10px;font-weight:normal;font-style:normal;color:#222;">900</div>
<div class="a" style="left:987px;top:346px;width:145px;height:1px;background:#c8c8c8"></div>
<div class="a t" style="left:956.80px;top:334.96px;font-size:10px;font-weight:normal;font-style:normal;color:#222;">600</div>
<div class="a" style="left:987px;top:386px;width:145px;height:1px;background:#c8c8c8"></div>
<div class="a t" style="left:956.80px;top:375.63px;font-size:10px;font-weight:normal;font-style:normal;color:#222;">300</div>
<div class="a t" style="left:956.80px;top:416.30px;font-size:10px;font-weight:normal;font-style:normal;color:#222;">0</div>
<div class="a" style="left:990.5px;top:251px;width:66.5px;height:176.5px;background:#0377e4"></div>
<div class="a" style="left:1062px;top:376.3px;width:66.5px;height:51.2px;background:#ee2a00"></div>
<div class="a" style="left:986px;top:249px;width:1.3px;height:181px;background:#111"></div>
<div class="a" style="left:983px;top:427px;width:151px;height:1.3px;background:#111"></div>
<div class="a t" style="left:1007.30px;top:430.92px;font-size:10px;font-weight:normal;font-style:normal;color:#222;">Income</div>
<div class="a t" style="left:1078.40px;top:430.92px;font-size:10px;font-weight:normal;font-style:normal;color:#222;">Expenses</div>
<div class="box" style="left:945px;top:466px;width:260px;height:146px"><i></i></div>
<div class="a" style="left:951px;top:472px;width:200px;height:18px;background:#d5d5dc"></div>
<div class="a t" style="left:956.50px;top:476.68px;font-size:10.5px;font-weight:bold;font-style:normal;color:#000;color:#3b3bd0;text-decoration:underline">Upcoming Transactions</div>
<div class="a t" style="left:954.50px;top:496.02px;font-size:10.4px;font-weight:normal;font-style:italic;color:#333;">Total Electric Inc.</div>
<div class="a" style="left:951px;top:510px;width:200px;height:19px;background:#e2ebf7"></div>
<div class="a t" style="left:954.50px;top:515.52px;font-size:10.4px;font-weight:normal;font-style:italic;color:#333;">Broadband Inc.</div>
<div class="a t" style="left:954.50px;top:535.02px;font-size:10.4px;font-weight:normal;font-style:italic;color:#333;">Mrs. Thomas</div>
<div class="a" style="left:951px;top:548px;width:200px;height:19px;background:#e2ebf7"></div>
<div class="a t" style="left:954.50px;top:554.52px;font-size:10.4px;font-weight:normal;font-style:italic;color:#333;">Broadband Inc.</div>
<div class="a t" style="left:954.50px;top:574.02px;font-size:10.4px;font-weight:normal;font-style:italic;color:#333;">Clearwater Inc.</div>
<div class="a" style="left:951px;top:588px;width:200px;height:19px;background:#e2ebf7"></div>
<div class="a t" style="left:954.50px;top:593.52px;font-size:10.4px;font-weight:normal;font-style:italic;color:#333;">Clearwater Inc.</div>
<div class="a" style="left:945px;top:620px;width:200px;height:1px;background:#c8c8c8"></div>
</div></div>
<div id="base"></div><div id="basebot"></div><div id="notch"></div>
<svg class="a" style="left:205px;top:553px" width="78" height="78" viewBox="205 553 78 78">
 <defs><clipPath id="lc"><rect x="209" y="558" width="69" height="69" rx="8"/></clipPath></defs>
 <rect x="207.3" y="556.3" width="72.3" height="72" rx="10" fill="#000"/>
 <rect x="209.3" y="558" width="68.7" height="69" rx="8.5" fill="#4b6cf2"/>
 <g clip-path="url(#lc)">
 <path d="M216.7 568.6 L225.6 563.6 L244.6 574.2 L244.6 586.4 L225.6 597.6 L225.6 609.3 L216.7 604.8 Z" fill="#fff" stroke="#101a50" stroke-width="1.1"/>
 <path d="M226.2 575.3 L237.3 581.4 L226.2 586.6 Z" fill="#4b6cf2"/>
 <path d="M216.5 592.5 L238.5 584.5" stroke="#111" stroke-width="1.3"/>
 <path d="M253.9 583.8 L275.2 594.7 L265.2 600.6 L246.3 590.3 L236.7 594.7 L236.7 617 L246 622.2 L265.2 610.9 L275.2 616.7 L256.6 627.3" fill="none" stroke="#fff" stroke-width="3.2" stroke-linejoin="miter"/>
 <path d="M254.6 595.4 L246.3 599.9 L246.3 611.2 L254.6 616" fill="none" stroke="#fff" stroke-width="3.2"/>
 </g>
</svg>
</body></html>
